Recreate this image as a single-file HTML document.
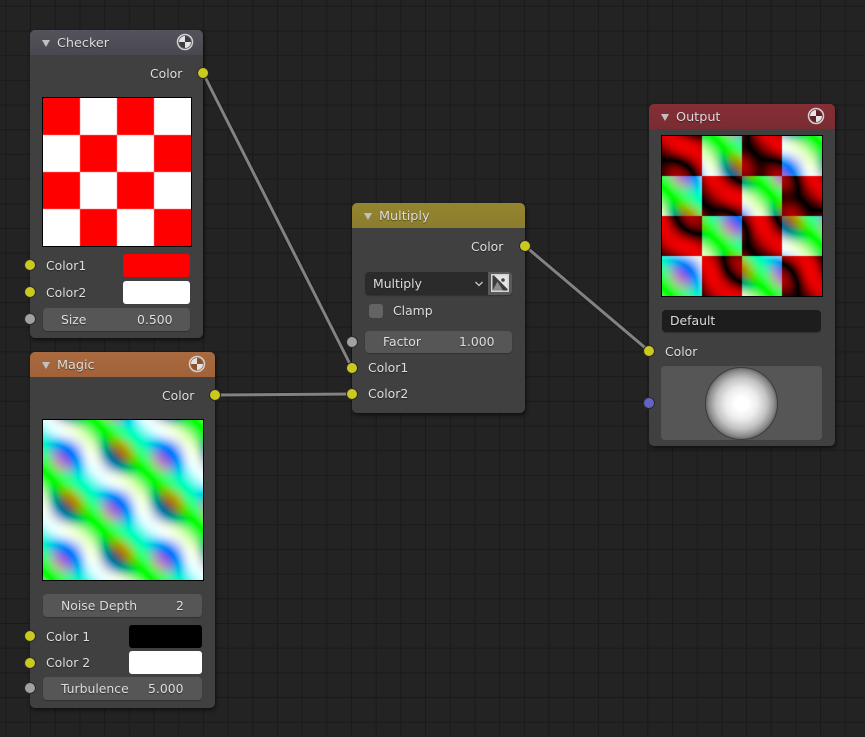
<!DOCTYPE html>
<html><head><meta charset="utf-8"><style>
html,body{margin:0;padding:0;background:#232323}
#r{position:relative;width:865px;height:737px;overflow:hidden;font-family:"DejaVu Sans","Liberation Sans",sans-serif;font-size:12.4px;color:#dedede;text-shadow:0 1px 1px rgba(0,0,0,.45);
background-color:#232323;background-image:linear-gradient(90deg,#1a1a1a 1.2px,transparent 1.2px),linear-gradient(#1a1a1a 1.2px,transparent 1.2px);background-size:24.7px 24.7px;background-position:5.4px 5.8px}
.a{position:absolute;white-space:nowrap}
.n{position:absolute;background:rgba(66,66,66,.96);border-radius:5px;box-shadow:1px 2px 4px rgba(0,0,0,.6)}
.h{position:absolute;left:0;top:0;right:0;height:25px;border-radius:5px 5px 0 0;font-size:12.8px;line-height:26px;color:#dcdcdc}
.h b{position:absolute;left:12px;top:10px;width:0;height:0;border-left:4px solid transparent;border-right:4px solid transparent;border-top:7px solid #c0c0c0}
.h span{position:absolute;left:27px;top:1px}
.s{position:absolute;width:10px;height:10px;border-radius:50%;border:1px solid #2a2a2a;box-sizing:content-box;margin:-6px 0 0 -6px}
.y{background:#c9c91f}.g{background:#a1a1a1}.u{background:#6363c7}
.f{position:absolute;background:#565656;border-radius:4px;line-height:23px;box-shadow:0 1px 1px rgba(0,0,0,.25)}
.sw{position:absolute;border-radius:3px}
canvas{position:absolute;border:1px solid #000;box-sizing:content-box}
svg{position:absolute;left:0;top:0}
</style></head><body><div id="r">
<svg width="865" height="737" style="left:0;top:0">
<g fill="none" stroke-linecap="round">
<g stroke="#1c1c1c" stroke-width="4.800"><path d="M203 73L352 368"/><path d="M215 395L352 394"/><path d="M525 246L649 351"/></g>
<g stroke="#828282" stroke-width="3"><path d="M203 73L352 368"/><path d="M215 395L352 394"/><path d="M525 246L649 351"/></g>
</g></svg>

<div class="n" style="left:30px;top:30px;width:173px;height:308px">
<div class="h" style="background:linear-gradient(#54535c,#494850)"><b></b><span>Checker</span>
<svg width="18" height="18" viewBox="0 0 18 18" style="left:146px;top:3px"><circle cx="9" cy="9" r="7.500" fill="none" stroke="#d0d0d0" stroke-width="1.500"/><circle cx="9" cy="9" r="6" fill="#e4e4e4"/><path d="M9 9V3A6 6 0 0 1 15 9Z" fill="#3c3c40"/><path d="M9 9V15A6 6 0 0 1 3 9Z" fill="#3c3c40"/></svg></div>
</div>
<div class="a" style="left:150px;top:65.500px">Color</div>
<canvas id="c1" width="148" height="148" style="left:42px;top:97px"></canvas>
<div class="a" style="left:46px;top:258px">Color1</div>
<div class="sw" style="left:123px;top:254px;width:67px;height:23px;background:#f00"></div>
<div class="a" style="left:46px;top:285px">Color2</div>
<div class="sw" style="left:123px;top:281px;width:67px;height:23px;background:#fff"></div>
<div class="f" style="left:43px;top:308px;width:147px;height:23px"></div>
<div class="a" style="left:61px;top:312px">Size</div>
<div class="a" style="left:137px;top:312px">0.500</div>

<div class="n" style="left:30px;top:352px;width:185px;height:356px">
<div class="h" style="background:linear-gradient(#a96a3f,#a1623a)"><b></b><span>Magic</span>
<svg width="18" height="18" viewBox="0 0 18 18" style="left:158px;top:3px"><circle cx="9" cy="9" r="7.500" fill="none" stroke="#d0d0d0" stroke-width="1.500"/><circle cx="9" cy="9" r="6" fill="#e4e4e4"/><path d="M9 9V3A6 6 0 0 1 15 9Z" fill="#8a5230"/><path d="M9 9V15A6 6 0 0 1 3 9Z" fill="#8a5230"/></svg></div>
</div>
<div class="a" style="left:162px;top:388px">Color</div>
<canvas id="c2" width="160" height="160" style="left:42px;top:419px"></canvas>
<div class="f" style="left:43px;top:594px;width:159px;height:23px"></div>
<div class="a" style="left:61px;top:598px">Noise Depth</div>
<div class="a" style="left:176px;top:598px">2</div>
<div class="a" style="left:46px;top:629px">Color 1</div>
<div class="sw" style="left:129px;top:625px;width:73px;height:23px;background:#000"></div>
<div class="a" style="left:46px;top:655px">Color 2</div>
<div class="sw" style="left:129px;top:651px;width:73px;height:23px;background:#fff"></div>
<div class="f" style="left:43px;top:677px;width:159px;height:23px"></div>
<div class="a" style="left:61px;top:681px">Turbulence</div>
<div class="a" style="left:148px;top:681px">5.000</div>

<div class="n" style="left:352px;top:203px;width:173px;height:210px">
<div class="h" style="background:linear-gradient(#94852f,#8b7d2e)"><b></b><span>Multiply</span></div>
</div>
<div class="a" style="left:471px;top:239px">Color</div>
<div class="f" style="left:365px;top:272px;width:123px;height:23px;background:#2b2b2b;border-radius:4px 0 0 4px"></div>
<div class="a" style="left:373px;top:276px">Multiply</div>
<svg width="865" height="737"><path d="M475.500 282l3.500 3.500 3.500-3.500" fill="none" stroke="#c8c8c8" stroke-width="1.300"/></svg>
<div class="f" style="left:488px;top:272px;width:24px;height:23px;background:#5a5a5a;border-radius:0 4px 4px 0"></div>
<svg width="865" height="737"><rect x="491" y="274" width="18" height="18" fill="#d4d4d4"/><rect x="492.500" y="275.500" width="15" height="15" fill="#3c3c3c"/><path d="M494 275.500H507.500V289Z" fill="#e4e4e4"/><circle cx="503" cy="280" r="1.800" fill="#444"/><path d="M497.500 281.500L492.500 290.500H503Z" fill="#8c8c8c"/></svg>
<div class="sw" style="left:369px;top:304px;width:14px;height:14px;background:#646464"></div>
<div class="a" style="left:393px;top:303px">Clamp</div>
<div class="f" style="left:365px;top:331px;width:147px;height:22px"></div>
<div class="a" style="left:383px;top:334px">Factor</div>
<div class="a" style="left:459px;top:334px">1.000</div>
<div class="a" style="left:368px;top:360px">Color1</div>
<div class="a" style="left:368px;top:386px">Color2</div>

<div class="n" style="left:649px;top:104px;width:186px;height:342px">
<div class="h" style="background:linear-gradient(#852e36,#7a2c33)"><b></b><span>Output</span>
<svg width="18" height="18" viewBox="0 0 18 18" style="left:158px;top:3px"><circle cx="9" cy="9" r="7.500" fill="none" stroke="#d0d0d0" stroke-width="1.500"/><circle cx="9" cy="9" r="6" fill="#e4e4e4"/><path d="M9 9V3A6 6 0 0 1 15 9Z" fill="#5e2026"/><path d="M9 9V15A6 6 0 0 1 3 9Z" fill="#5e2026"/></svg></div>
</div>
<canvas id="c3" width="160" height="160" style="left:661px;top:135px"></canvas>
<div class="f" style="left:662px;top:310px;width:159px;height:22px;background:#1d1d1d"></div>
<div class="a" style="left:670px;top:313px">Default</div>
<div class="a" style="left:665px;top:344px">Color</div>
<div class="f" style="left:661px;top:366px;width:161px;height:74px;box-shadow:none"></div>
<div class="a" style="left:705px;top:367px;width:71px;height:71px;border-radius:50%;border:1px solid #3c3c3c;background:radial-gradient(circle closest-side at 50% 50%,#fff 0,#fff 18%,#ececec 45%,#c2c2c2 72%,#8c8c8c 92%,#6a6a6a 100%)"></div>

<div class="s y" style="left:203px;top:73px"></div>
<div class="s y" style="left:30px;top:265px"></div>
<div class="s y" style="left:30px;top:292px"></div>
<div class="s g" style="left:30px;top:319px"></div>
<div class="s y" style="left:215px;top:395px"></div>
<div class="s y" style="left:30px;top:636px"></div>
<div class="s y" style="left:30px;top:663px"></div>
<div class="s g" style="left:30px;top:688px"></div>
<div class="s y" style="left:525px;top:246px"></div>
<div class="s g" style="left:352px;top:342px"></div>
<div class="s y" style="left:352px;top:368px"></div>
<div class="s y" style="left:352px;top:394px"></div>
<div class="s y" style="left:649px;top:351px"></div>
<div class="s u" style="left:649px;top:403px"></div>
</div>
<script>
function magic(u,v){var t=1,p=u,q=v;
var x=Math.sin((p+q)*5),y=Math.cos((-p+q)*5),z=-Math.cos((-p-q)*5);
y=-Math.cos(x-y+z);x=Math.cos(x-y-z);t=2;
return [0.5-x/t,0.5-y/t,0.5-z/t];}
function srgb(a){a=Math.max(0,Math.min(1,a));return 255*(a<=0.0031308?12.92*a:1.055*Math.pow(a,1/2.4)-0.055);}
function draw(id,fn){var c=document.getElementById(id),w=c.width,h=c.height,g=c.getContext('2d'),d=g.createImageData(w,h);
for(var j=0;j<h;j++)for(var i=0;i<w;i++){var u=(i+.5)/w,v=(j+.5)/h,k=(j*w+i)*4,r=fn(u,v);
d.data[k]=srgb(r[0]);d.data[k+1]=srgb(r[1]);d.data[k+2]=srgb(r[2]);d.data[k+3]=255;}
g.putImageData(d,0,0);}
function chk(u,v){return (Math.floor(u*4)+Math.floor(v*4))%2==0?[1,0,0]:[1,1,1];}
function mg(u,v){return magic(u*2-1,1-v*2);}
draw('c1',chk);draw('c2',mg);
draw('c3',function(u,v){var a=chk(u,v),b=mg(u,v);return [a[0]*b[0],a[1]*b[1],a[2]*b[2]];});
</script>
</body></html>
